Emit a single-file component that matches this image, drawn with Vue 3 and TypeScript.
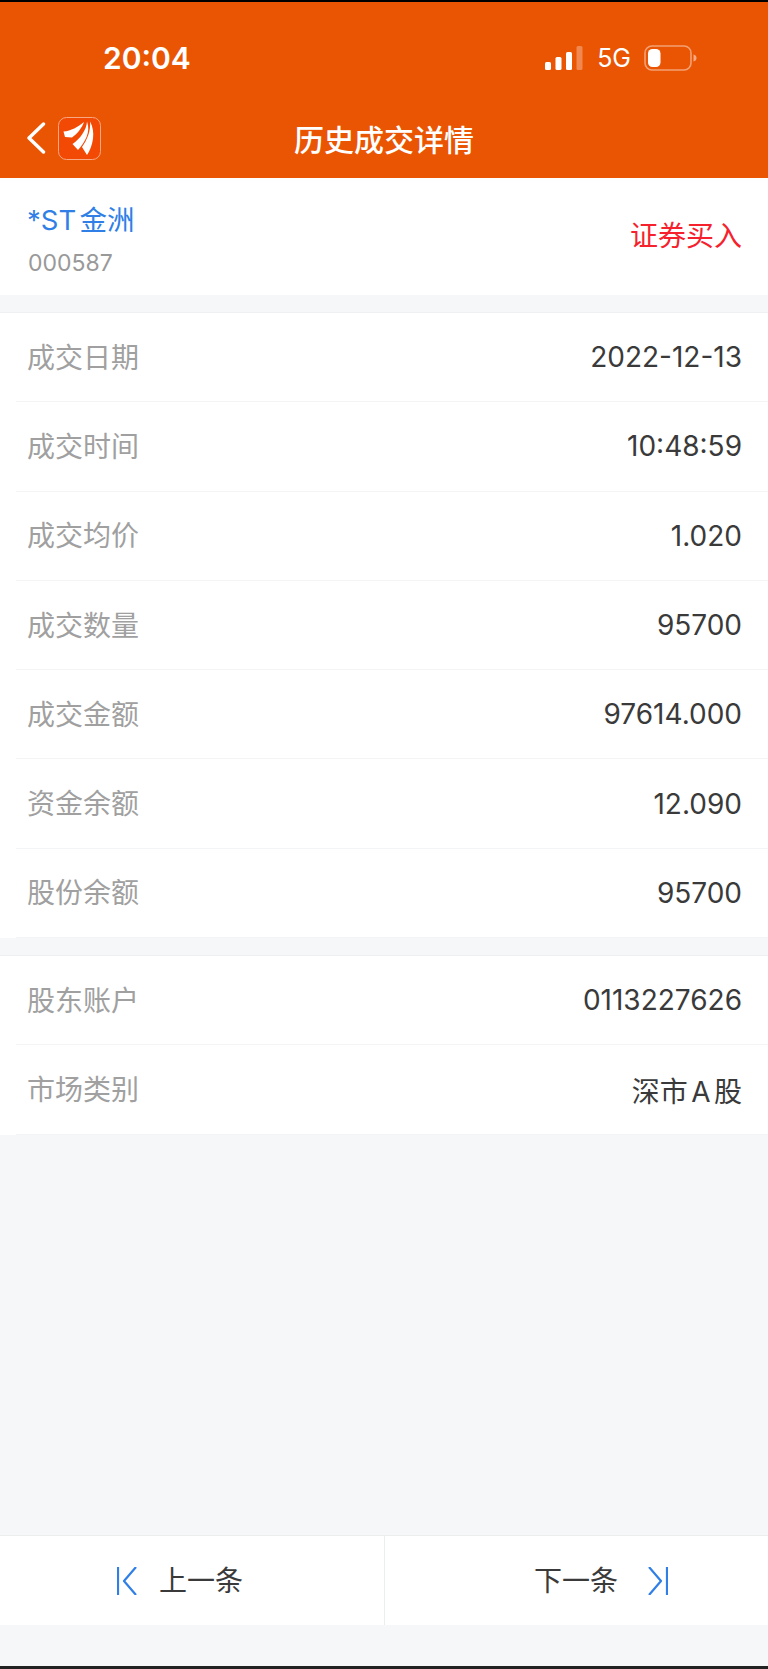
<template>
  <div class="page">
    <header class="top">
      <div class="status">
        <span class="time">20:04</span>
        <div class="status-right">
          <svg class="signal" width="38" height="24" viewBox="0 0 38 24">
            <rect x="0" y="16" width="6" height="8" rx="1.5" fill="#fff" />
            <rect x="10.5" y="11" width="6" height="13" rx="1.5" fill="#fff" />
            <rect x="21" y="6" width="6" height="18" rx="1.5" fill="#fff" />
            <rect x="31.5" y="0" width="6" height="24" rx="1.5" fill="#fff" opacity="0.3" />
          </svg>
          <span class="net">5G</span>
          <svg class="battery" width="54" height="26" viewBox="0 0 54 26">
            <rect x="1" y="1" width="46" height="24" rx="7" fill="none" stroke="#fff" stroke-opacity="0.45" stroke-width="1.6" />
            <rect x="4" y="4" width="12.5" height="18" rx="4.5" fill="#fff" />
            <path d="M49.5 9.5c2 .4 3 1.800 3 3.500s-1 3.100-3 3.500z" fill="#fff" opacity="0.5" />
          </svg>
        </div>
      </div>
      <div class="nav">
        <svg class="back" width="20" height="32" viewBox="0 0 20 32">
          <path d="M17.500 2 3 16l14.500 14" fill="none" stroke="#fff" stroke-width="3.400" stroke-linecap="round" stroke-linejoin="round" />
        </svg>
        <svg class="logo" width="43" height="43" viewBox="0 0 43 43">
          <rect x="0.500" y="0.500" width="42" height="42" rx="8" fill="#f24a05" stroke="#f9a884" />
          <path d="M5.500 14.500C13 14 20 10 26 5c-2 6-7 12-12 15.500L7 20z" fill="#fff" />
          <path d="M29 4.500C28.500 13 22 22 14.500 27l5.500 6c7-8 13-18 9-28.500z" fill="#fff" />
          <path d="M32 4.500C33 14 29 23 24 30l5 8c6-9 9-23 3-33.500z" fill="#fff" />
        </svg>
        <h1 class="title">历史成交详情</h1>
      </div>
    </header>

    <section class="stock">
      <div>
        <div class="stock-name">*ST金洲</div>
        <div class="stock-code">000587</div>
      </div>
      <div class="side">证券买入</div>
    </section>

    <section v-for="(group, i) in groups" :key="i" class="group">
      <div v-for="row in group" :key="row.label" class="row">
        <span class="label">{{ row.label }}</span>
        <span class="value">{{ row.value }}</span>
      </div>
    </section>

    <div class="spacer"></div>

    <footer class="pager">
      <button type="button" class="pager-btn prev">
        <svg width="20" height="28" viewBox="0 0 20 28">
          <path d="M1 0v28M19 0 7 14l12 14" fill="none" stroke="#2f7fe6" stroke-width="2.200" stroke-linejoin="round" />
        </svg>
        <span>上一条</span>
      </button>
      <button type="button" class="pager-btn next">
        <span>下一条</span>
        <svg width="20" height="28" viewBox="0 0 20 28">
          <path d="M19 0v28M1 0l12 14L1 28" fill="none" stroke="#2f7fe6" stroke-width="2.200" stroke-linejoin="round" />
        </svg>
      </button>
    </footer>
    <div class="bottom-bar"></div>
  </div>
</template>

<script setup lang="ts">
interface Row {
  label: string
  value: string
}

const groups: Row[][] = [
  [
    { label: '成交日期', value: '2022-12-13' },
    { label: '成交时间', value: '10:48:59' },
    { label: '成交均价', value: '1.020' },
    { label: '成交数量', value: '95700' },
    { label: '成交金额', value: '97614.000' },
    { label: '资金余额', value: '12.090' },
    { label: '股份余额', value: '95700' },
  ],
  [
    { label: '股东账户', value: '0113227626' },
    { label: '市场类别', value: '深市A股' },
  ],
]
</script>

<style>
body {
  margin: 0;
}
</style>

<style scoped>
.page {
  width: 768px;
  height: 1669px;
  display: flex;
  flex-direction: column;
  background: #f6f7f9;
  font-family: Inter, 'Noto Sans CJK SC', sans-serif;
  text-autospace: normal;
  overflow: hidden;
}

.top {
  height: 178px;
  box-sizing: border-box;
  flex: none;
  background: #ea5504;
  border-top: 2px solid #000;
  color: #fff;
}

.status {
  height: 96px;
  display: flex;
  align-items: center;
  justify-content: space-between;
  padding: 16px 70px 0 103px;
  box-sizing: border-box;
}

.time {
  font-size: 30px;
  font-weight: 600;
}

.status-right {
  display: flex;
  align-items: center;
}

.signal {
  margin-right: 14px;
}

.net {
  font-size: 25px;
  margin-right: 13px;
}

.nav {
  position: relative;
  height: 80px;
  display: flex;
  align-items: center;
  padding-left: 26px;
}

.back {
  margin-right: 12px;
}

.title {
  position: absolute;
  left: 0;
  right: 0;
  margin: 0;
  text-align: center;
  font-size: 30px;
  font-weight: 500;
}

.stock {
  height: 117px;
  flex: none;
  box-sizing: border-box;
  display: flex;
  align-items: center;
  justify-content: space-between;
  padding: 0 26px 0 27px;
  background: #fff;
  margin-bottom: 17px;
}

.stock-name {
  font-size: 27.500px;
  line-height: 38px;
  margin-top: 5px;
  color: #2f7fe6;
}

.stock-code {
  margin-top: 10px;
  margin-left: 1px;
  font-size: 23px;
  line-height: 28px;
  color: #999;
}

.side {
  margin-top: -5px;
  font-size: 28px;
  color: #f5222d;
}

.group {
  flex: none;
  background: #fff;
  margin-bottom: 17px;
  padding-left: 16px;
  border-top: 1px solid #eff0f2;
}

.row {
  height: 89.300px;
  box-sizing: border-box;
  display: flex;
  align-items: center;
  justify-content: space-between;
  padding: 0 26px 0 12px;
  font-size: 28px;
  font-weight: 400;
  border-bottom: 1px solid #f3f4f5;
}

.label {
  margin-top: -3px;
  margin-left: -1px;
  color: #a0a0a0;
}

.value {
  color: #3a3a3a;
}

.spacer {
  flex: 1;
}

.pager {
  flex: none;
  height: 90px;
  display: grid;
  grid-template-columns: 1fr 1fr;
  background: #fff;
  border-top: 1px solid #eceded;
  box-sizing: border-box;
  margin-bottom: 41px;
}

.pager-btn {
  border: 0;
  padding: 0;
  background: none;
  display: flex;
  align-items: center;
  font: inherit;
  font-size: 28px;
  color: #3a3a3a;
}

.pager-btn span {
  margin-top: -4px;
}

.pager-btn.prev {
  justify-content: flex-start;
  gap: 22px;
  padding-left: 117px;
}

.pager-btn.next {
  justify-content: flex-end;
  gap: 30px;
  padding-right: 100px;
  border-left: 1px solid #eceded;
}

.bottom-bar {
  height: 3px;
  flex: none;
  background: #222;
}
</style>
